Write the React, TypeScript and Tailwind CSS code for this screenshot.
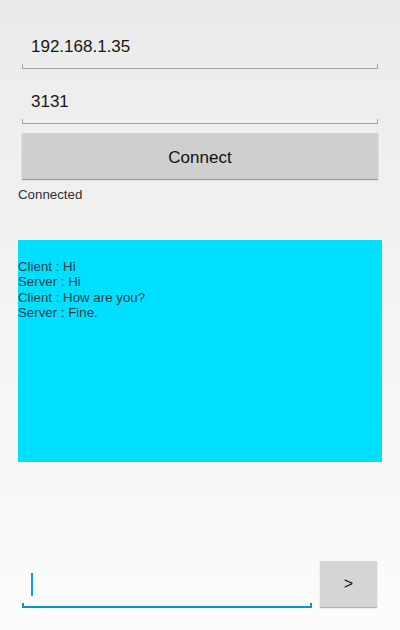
import React from "react";

export default function App() {
  return (
    <div className="w-[400px] h-[630px] flex flex-col bg-gradient-to-b from-[#ebebeb] to-[#fcfcfc] font-['Liberation_Sans',Arial,sans-serif] px-[18px]">
      {/* Field 1 */}
      <div className="mx-[4px] pt-[37px]">
        <div className="h-[20px] leading-[20px] text-[17px] text-[#151515] pl-[9px]">192.168.1.35</div>
        <div className="mt-[7px] h-[5px] border-b border-l border-r border-[#a3a3a3]" />
      </div>
      {/* Field 2 */}
      <div className="mx-[4px] pt-[23px]">
        <div className="h-[20px] leading-[20px] text-[17px] text-[#151515] pl-[9px]">3131</div>
        <div className="mt-[7px] h-[5px] border-b border-l border-r border-[#a3a3a3]" />
      </div>
      {/* Connect button */}
      <div className="mx-[4px] mt-[9px] h-[46px] pt-[3px] bg-[#cfcfcf] shadow-[0_1px_1px_rgba(0,0,0,0.35)] flex items-center justify-center text-[17px] text-[#111]">
        Connect
      </div>
      <div className="mt-[8px] h-[16px] leading-[16px] text-[13.3px] text-[#2e2e2e]">Connected</div>
      {/* Chat box */}
      <div className="mt-[37px] h-[222px] bg-[#00dfff] pt-[19px] text-[13.3px] leading-[15.4px] text-[#2f3b3f]">
        <div>Client : Hi</div>
        <div>Server : Hi</div>
        <div>Client : How are you?</div>
        <div>Server : Fine.</div>
      </div>
      <div className="flex-1" />
      {/* Bottom row */}
      <div className="flex items-start ml-[4px] mr-[5px] mb-[22px]">
        <div className="w-[290px] flex flex-col">
          <div className="mt-[12px] ml-[9px] w-[2px] h-[23px] bg-[#0a9bef]" />
          <div className="mt-[7px] h-[5px] border-b-2 border-l-2 border-r-2 border-[#0099cc]" />
        </div>
        <div className="ml-[8px] w-[57px] h-[46px] bg-[#d5d5d5] shadow-[0_1px_1px_rgba(0,0,0,0.3)] flex items-center justify-center text-[16px] text-[#111]">
          &gt;
        </div>
      </div>
    </div>
  );
}
